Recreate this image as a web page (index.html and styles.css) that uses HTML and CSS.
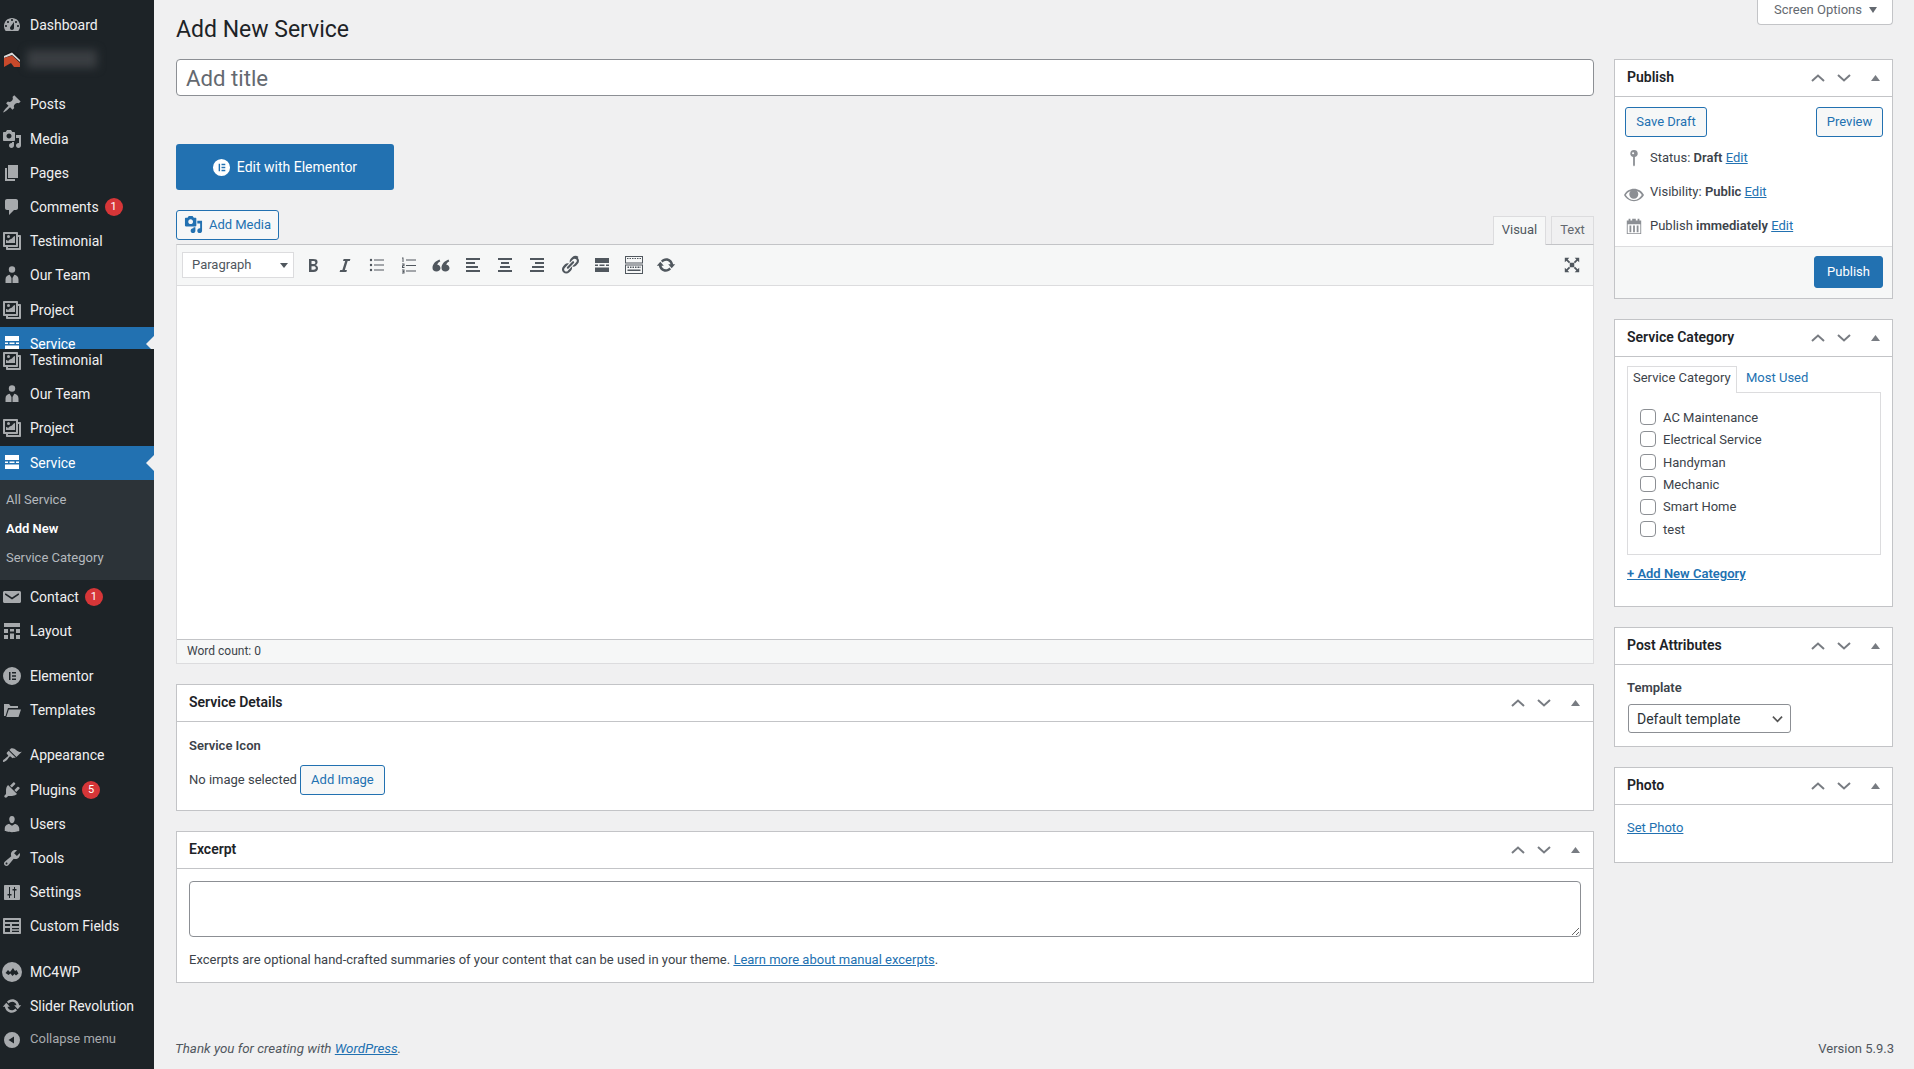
FILE: index.html
```html
<!DOCTYPE html>
<html lang="en">
<head>
<meta charset="utf-8">
<title>Add New Service</title>
<link rel="stylesheet" href="styles.css">
</head>
<body>
<svg class="sprite" xmlns="http://www.w3.org/2000/svg">
<symbol id="i-dash" viewBox="0 0 20 20"><path fill-rule="evenodd" d="M3.76 16h12.48c1.1-1.37 1.76-3.11 1.76-5 0-4.42-3.58-8-8-8s-8 3.58-8 8c0 1.89.66 3.63 1.76 5zM10 4c.55 0 1 .45 1 1s-.45 1-1 1-1-.45-1-1 .45-1 1-1zM6 6c.55 0 1 .45 1 1s-.45 1-1 1-1-.45-1-1 .45-1 1-1zm8 0c.55 0 1 .45 1 1s-.45 1-1 1-1-.45-1-1 .45-1 1-1zm-5.37 5.55L12 7v6c0 1.1-.9 2-2 2s-2-.9-2-2c0-.57.24-1.08.63-1.45zM4 10c.55 0 1 .45 1 1s-.45 1-1 1-1-.45-1-1 .45-1 1-1zm12 0c.55 0 1 .45 1 1s-.45 1-1 1-1-.45-1-1 .45-1 1-1z"/></symbol>
<symbol id="i-post" viewBox="0 0 20 20"><path d="M10.44 3.02l1.82-1.82 6.36 6.35-1.83 1.82c-1.05-.68-2.48-.57-3.41.36l-.75.75c-.92.93-1.04 2.35-.35 3.41l-1.83 1.82-2.41-2.41-2.8 2.79c-.42.42-3.38 2.71-3.8 2.29s1.86-3.39 2.28-3.81l2.79-2.79L4.1 9.36l1.83-1.82c1.05.69 2.48.57 3.4-.36l.75-.75c.93-.92 1.05-2.35.36-3.41z"/></symbol>
<symbol id="i-media" viewBox="0 0 20 20"><path fill-rule="evenodd" d="M13 11V4c0-.55-.45-1-1-1h-1.67L9 1H5L3.67 3H2c-.55 0-1 .45-1 1v7c0 .55.45 1 1 1h10c.55 0 1-.45 1-1zM7 4.5c1.38 0 2.5 1.12 2.5 2.5S8.38 9.5 7 9.5 4.5 8.38 4.5 7 5.62 4.5 7 4.5z"/><path d="M14 6h5v10.5c0 1.38-1.12 2.5-2.5 2.5S14 17.88 14 16.5s1.12-2.5 2.5-2.5c.17 0 .34.02.5.05V9h-3V6zm-4 8.05V13h2v3.5c0 1.38-1.12 2.5-2.5 2.5S7 17.88 7 16.5 8.12 14 9.5 14c.17 0 .34.02.5.05z"/></symbol>
<symbol id="i-page" viewBox="0 0 20 20"><path d="M6 15V2h10v13H6zm-1 1h8v2H3V5h2v11z"/></symbol>
<symbol id="i-comment" viewBox="0 0 20 20"><path d="M5 2h9c1.1 0 2 .9 2 2v7c0 1.1-.9 2-2 2h-2l-5 5v-5H5c-1.1 0-2-.9-2-2V4c0-1.1.9-2 2-2z"/></symbol>
<symbol id="i-gallery" viewBox="0 0 20 20"><path fill-rule="evenodd" d="M2 1h13c.6 0 1 .4 1 1v2h2c.6 0 1 .4 1 1v13c0 .6-.4 1-1 1H5c-.6 0-1-.4-1-1v-2H2c-.6 0-1-.4-1-1V2c0-.6.4-1 1-1zm1 2v11h11V3H3zm13 3v9c0 .6-.4 1-1 1H6v1h11V6h-1z"/><path d="M5 5.500a1.500 1.500 0 1 0 3 0 1.500 1.500 0 0 0-3 0zM4 12V9c2 0 2 1.500 2 1.500S7 8 9 8c1.500 0 2-3 4-3v7z"/></symbol>
<symbol id="i-team" viewBox="0 0 20 20"><circle cx="10" cy="4.500" r="3.200"/><path d="M3.500 18v-3.500c0-2.800 1.800-4.200 4.200-4.700L9.500 13v5zM16.500 18v-3.500c0-2.800-1.800-4.200-4.200-4.700L10.500 13v5z"/></symbol>
<symbol id="i-service" viewBox="0 0 20 20"><path d="M3 2h14v5H3zM3 8.500h3v1.500H3zM7.500 8.500h5v1.500h-5zM14 8.500h3v1.500h-3zM3 11.500h14V16H3z"/></symbol>
<symbol id="i-mail" viewBox="0 0 20 20"><path d="M19 14.500v-9c0-.83-.67-1.500-1.500-1.500H2.500C1.670 4 1 4.670 1 5.500v9c0 .83.67 1.500 1.500 1.500h15c.83 0 1.500-.67 1.500-1.500zM3 6.500h1L10 10.500l6-4h1v1.200L10 12.500 3 7.700z"/></symbol>
<symbol id="i-layout" viewBox="0 0 20 20"><path d="M2 2h16v4H2zM2 8h4v4H2zM8 8h4v2.500H8zM14 8h4v4h-4zM2 14h4v4H2zM8 12.500h4V18H8zM14 14h4v4h-4z"/></symbol>
<symbol id="i-elementor" viewBox="0 0 20 20"><path fill-rule="evenodd" d="M10 1a9 9 0 1 0 0 18 9 9 0 0 0 0-18zM7 6h1.500v8H7V6zm3 0h4v1.600h-4V6zm0 3.200h4v1.600h-4V9.200zm0 3.200h4V14h-4v-1.600z"/></symbol>
<symbol id="i-folder" viewBox="0 0 20 20"><path d="M2 4h5l1.500 2H16v2H6l-2.500 8H2zM6.800 9.500H19L16.500 17H4.300z"/></symbol>
<symbol id="i-brush" viewBox="0 0 20 20"><path d="M14.480 11.060L7.410 3.990l1.500-1.500c.5-.56 2.300-.47 3.510.32 1.210.8 1.430 1.280 2.910 2.100 1.180.64 2.450 1.260 4.450.85zm-.71.71L6.700 4.700 4.930 6.470c-.39.39-.39 1.020 0 1.410l1.060 1.060c.39.39.39 1.030 0 1.420-.6.6-1.430 1.110-2.210 1.690-.35.26-.7.53-1.010.84C1.430 13.230.4 14.980 1.100 15.680c.7.7 2.460-.33 3.820-1.670.31-.31.58-.66.85-1.020.57-.78 1.080-1.600 1.690-2.210.39-.39 1.020-.39 1.410 0l1.060 1.060c.39.39 1.020.39 1.410 0z"/></symbol>
<symbol id="i-plug" viewBox="0 0 20 20"><path d="M13.110 4.360L9.870 7.600 8 5.730l3.240-3.240c.35-.34 1.050-.2 1.560.32.52.51.66 1.210.31 1.550zm-8 1.770l.91-1.120 9.010 9.010-1.190.84c-.71.71-2.630 1.160-3.820 1.160H6.140L4.900 17.260c-.59.59-1.540.59-2.120 0-.59-.58-.59-1.530 0-2.120l1.240-1.240v-3.880c0-1.130.4-3.190 1.090-3.890zm7.260 3.970l3.240-3.240c.34-.35 1.040-.21 1.550.31.52.51.66 1.210.31 1.550l-3.240 3.250z"/></symbol>
<symbol id="i-user" viewBox="0 0 20 20"><path d="M10 9.250c-2.270 0-2.730-3.440-2.730-3.440C7 4.020 7.820 2 9.970 2c2.160 0 2.980 2.020 2.710 3.810 0 0-.41 3.440-2.680 3.440zm0 2.570L12.720 10c2.390 0 4.520 2.330 4.520 4.530v2.490s-3.650 1.130-7.240 1.130c-3.650 0-7.240-1.130-7.240-1.130v-2.490c0-2.250 1.940-4.480 4.470-4.480z"/></symbol>
<symbol id="i-tool" viewBox="0 0 20 20"><path fill-rule="evenodd" d="M16.680 9.770c-1.340 1.340-3.300 1.670-4.950.99l-5.410 6.520c-.99.99-2.590.99-3.580 0s-.99-2.590 0-3.570l6.520-5.420c-.68-1.650-.35-3.610.99-4.950 1.280-1.280 3.120-1.620 4.720-1.060l-2.890 2.890 2.820 2.820 2.860-2.870c.53 1.580.18 3.390-1.080 4.650zM3.810 16.210c.4.39 1.040.39 1.430 0 .4-.4.4-1.040 0-1.430-.39-.4-1.030-.4-1.430 0-.39.39-.39 1.030 0 1.430z"/></symbol>
<symbol id="i-settings" viewBox="0 0 20 20"><path fill-rule="evenodd" d="M18 17V4c0-.55-.45-1-1-1H3c-.55 0-1 .45-1 1v13c0 .55.45 1 1 1h14c.55 0 1-.45 1-1zM7 5h1v7h1.500v1.500H8V16H7v-2.500H5.500V12H7V5zm5 3.500h-1.500V7H12V5h1v2h1.500v1.500H13V16h-1V8.500z"/></symbol>
<symbol id="i-fields" viewBox="0 0 20 20"><path fill-rule="evenodd" d="M2 2h16c.6 0 1 .4 1 1v14c0 .6-.4 1-1 1H2c-.6 0-1-.4-1-1V3c0-.6.4-1 1-1zm1 2v2h14V4H3zm0 4v2h5V8H3zm7 0v2h7V8h-7zm-7 4v4h5v-4H3zm7 0v1.200h7V12h-7zm0 2.800V16h7v-1.200h-7z"/></symbol>
<symbol id="i-mc" viewBox="0 0 20 20"><path fill-rule="evenodd" d="M10 0a10 10 0 1 0 0 20 10 10 0 0 0 0-20zM3.500 11l2.500-3 2 2 3-4 2 3 1.500-1 2 3.500-2.500 2-1.500-1.500-2 2-2-2.500-2 1.500z"/></symbol>
<symbol id="i-update" viewBox="0 0 20 20"><path d="M10.200 3.280c3.530 0 6.430 2.610 6.920 6h2.080l-3.500 4-3.500-4h2.320c-.45-1.970-2.210-3.440-4.320-3.440-1.450 0-2.730.71-3.540 1.780L4.950 5.660C6.230 4.200 8.110 3.280 10.200 3.280zm-.4 13.440c-3.520 0-6.430-2.610-6.920-6H.800l3.500-4c1.170 1.330 2.330 2.670 3.500 4H5.480c.45 1.970 2.210 3.440 4.320 3.440 1.450 0 2.730-.71 3.540-1.780l1.710 1.950c-1.280 1.460-3.150 2.390-5.250 2.390z"/></symbol>
<symbol id="i-collapse" viewBox="0 0 20 20"><path fill-rule="evenodd" d="M10 2a8 8 0 1 0 0 16 8 8 0 0 0 0-16zm2 4.500v7L6.500 10z"/></symbol>
<symbol id="i-bold" viewBox="0 0 20 20"><path fill-rule="evenodd" d="M6 4v13h4.540c1.370 0 2.460-.33 3.260-1 .8-.66 1.200-1.580 1.200-2.770 0-.84-.24-1.540-.71-2.080-.47-.55-1.150-.9-2.030-1.050v-.11c.68-.14 1.240-.5 1.660-1.060.42-.57.64-1.240.64-2.010 0-1.010-.39-1.780-1.150-2.320C12.650 4.200 11.560 4 10.140 4H6zm2.500 5.200V6.100h1.670c.78 0 1.340.1 1.680.33.34.22.51.58.51 1.070 0 .53-.18.93-.53 1.170-.35.25-.89.37-1.600.37H8.500zm0 2h1.900c.8 0 1.400.14 1.800.43.4.28.6.71.6 1.290 0 .64-.2 1.110-.58 1.400-.39.3-.98.45-1.780.45H8.500v-3.570z"/></symbol>
<symbol id="i-italic" viewBox="0 0 20 20"><path d="M14.780 6h-2.130l-2.800 9h2.120l-.62 2H4.600l.62-2h2.140l2.800-9H8.030l.62-2h6.750z"/></symbol>
<symbol id="i-ul" viewBox="0 0 20 20"><path d="M5.200 5a1.200 1.200 0 1 1-2.400 0 1.200 1.200 0 0 1 2.400 0zM5.200 10a1.200 1.200 0 1 1-2.400 0 1.200 1.200 0 0 1 2.400 0zM5.200 15a1.200 1.200 0 1 1-2.400 0 1.200 1.200 0 0 1 2.400 0zM7 4.500h10v1H7zM7 9.500h10v1H7zM7 14.500h10v1H7z"/></symbol>
<symbol id="i-ol" viewBox="0 0 20 20"><path d="M3 2.500h1.500V7h-1V3.500H3zM3 8.500h2.500v2.700H4v.8h1.500v1H3v-2.700h1.500v-.8H3zM3 14.500h2.500v4H3v-1h1.500v-.5h-1v-1h1v-.5H3zM7 4.500h10v1H7zM7 10h10v1H7zM7 15.500h10v1H7z"/></symbol>
<symbol id="i-quote" viewBox="0 0 20 20"><path d="M9.500 13.200c0-1.900-1.400-3.400-3.200-3.500.3-1.300 1.400-2.500 3-3.200L8.500 4.500C4.500 6 1.500 9 1.500 13c0 2 1.500 3.500 4 3.500 2 0 4-1.400 4-3.300zM18.500 13.200c0-1.900-1.400-3.400-3.200-3.500.3-1.300 1.400-2.500 3-3.200l-.8-2C13.500 6 10.500 9 10.500 13c0 2 1.500 3.500 4 3.500 2 0 4-1.400 4-3.300z"/></symbol>
<symbol id="i-al" viewBox="0 0 20 20"><path d="M3 3h14v2H3zM3 7h9v2H3zM3 11h12v2H3zM3 15h14v2H3z"/></symbol>
<symbol id="i-ac" viewBox="0 0 20 20"><path d="M3 3h14v2H3zM6 7h8v2H6zM5 11h10v2H5zM3 15h14v2H3z"/></symbol>
<symbol id="i-ar" viewBox="0 0 20 20"><path d="M3 3h14v2H3zM8 7h9v2H8zM5 11h12v2H5zM3 15h14v2H3z"/></symbol>
<symbol id="i-link" viewBox="0 0 20 20"><path d="M17.740 2.760c1.680 1.690 1.680 4.410 0 6.100l-1.530 1.520c-1.120 1.120-2.700 1.490-4.130 1.130l2.620-2.620.76-.77.76-.76c.84-.84.84-2.200 0-3.040-.84-.85-2.200-.85-3.040 0l-.77.76-2.620 2.620c-.37-1.430 0-3.010 1.120-4.130l1.520-1.530c1.690-1.680 4.420-1.680 6.100 0zM8.590 13.430l5.340-5.340c.42-.42.42-1.100 0-1.520-.44-.43-1.130-.39-1.530 0l-5.330 5.340c-.42.42-.42 1.100 0 1.520.44.43 1.130.39 1.520 0zm-.76 2.290l2.620-2.620 1.520-1.520c.38 1.430 0 3.020-1.120 4.140l-1.520 1.520c-1.690 1.690-4.410 1.690-6.100 0-1.690-1.680-1.690-4.410 0-6.100l1.530-1.520c1.120-1.120 2.700-1.500 4.130-1.120L4.760 12.920c-.84.840-.84 2.200 0 3.040.84.850 2.200.85 3.040 0z"/></symbol>
<symbol id="i-more" viewBox="0 0 20 20"><path d="M3 3h14v5H3zM3 9.500h3V11H3zM7.500 9.500h5V11h-5zM14 9.500h3V11h-3zM3 12.500h14V17H3z"/></symbol>
<symbol id="i-kitchen" viewBox="0 0 20 20"><path fill-rule="evenodd" d="M1 1h18v7.500H1V1zm1 1v5.500h16V2H2zm1 1h1.500v1H3zm2.500 0H7v1H5.500zM8 3h1.500v1H8zm2.500 0H12v1h-1.500zM13 3h1.500v1H13zm2.500 0H17v1h-1.500zM1 9.500h18V19H1V9.500zm1 1V18h16v-7.500H2zm1.500 1H5V13H3.500zm2.500 0h1.500V13H6zm2.500 0H10V13H8.500zm2.500 0h1.500V13H11zm2.500 0H15V13h-1.500zm2 0h1V13h-1zM3.500 14.500h13V16h-13z"/></symbol>
<symbol id="i-full" viewBox="0 0 20 20"><path d="M7.500 7.500h5v5h-5zM2 2h5L5.200 3.800 8 6.600 6.600 8 3.800 5.200 2 7zM18 2v5l-1.800-1.800L13.400 8 12 6.600l2.800-2.800L13 2zM2 18v-5l1.800 1.800L6.600 12 8 13.400l-2.800 2.800L7 18zM18 18h-5l1.800-1.800L12 13.400l1.400-1.400 2.800 2.800L18 13z"/></symbol>
<symbol id="i-pin" viewBox="0 0 20 20"><path fill-rule="evenodd" d="M10 1a4 4 0 0 1 1 7.900V18l-1 1.500L9 18V8.900A4 4 0 0 1 10 1zM9 3.500a1.200 1.200 0 1 0 0 2.400 1.200 1.200 0 0 0 0-2.400z"/></symbol>
<symbol id="i-eye" viewBox="0 0 20 20"><path fill-rule="evenodd" d="M19.700 9.400C17.700 6 14.100 3.800 10 3.800S2.300 6 .3 9.400L0 10l.3.600c2 3.400 5.600 5.600 9.700 5.600s7.700-2.200 9.700-5.600l.3-.6-.3-.6zM10 15c-3.400 0-6.400-1.900-8.200-5 1.100-1.800 2.800-3.200 4.800-4-.8.800-1.300 1.900-1.300 3.200 0 2.500 2 4.500 4.500 4.500s4.500-2 4.500-4.500c0-1.300-.5-2.400-1.300-3.200 2 .8 3.700 2.200 4.800 4-1.800 3.100-4.800 5-7.800 5z"/></symbol>
<symbol id="i-cal" viewBox="0 0 20 20"><path fill-rule="evenodd" d="M2 4h2V2h2v2h2V2h4v2h2V2h2v2h2v15H2V4zm1 4v10h14V8H3zm2 1.500h2V17H5zm4 0h2V17H9zm4 0h2V17h-2z"/></symbol>
<symbol id="i-up" viewBox="0 0 14 8"><path class="chev" d="M1 7l6-5.500L13 7"/></symbol>
<symbol id="i-down" viewBox="0 0 14 8"><path class="chev" d="M1 1l6 5.500L13 1"/></symbol>
<symbol id="i-tri" viewBox="0 0 9 6"><path d="M4.500 0L9 6H0z"/></symbol>
</svg>

<div class="page">
<nav class="sidebar">
  <ul class="menu menu-first">
    <li class="mi"><svg class="mi-ic"><use href="#i-dash"/></svg>Dashboard</li>
    <li class="mi mi-hidden"><svg class="mi-ic" viewBox="0 0 20 20"><path class="logo-dark" d="M2 6l8-4 8 6v6z"/><path class="logo-white" d="M2 7l8-3.500L18 11v2L10 6 2 9z"/><path class="logo-red" d="M2 9l8-2.500 8 7.500v4h-6l-3-4-7 4z"/></svg><span class="blur"></span></li>
    <li class="mi sep"><svg class="mi-ic"><use href="#i-post"/></svg>Posts</li>
    <li class="mi"><svg class="mi-ic"><use href="#i-media"/></svg>Media</li>
    <li class="mi"><svg class="mi-ic"><use href="#i-page"/></svg>Pages</li>
    <li class="mi"><svg class="mi-ic"><use href="#i-comment"/></svg>Comments<span class="badge">1</span></li>
    <li class="mi"><svg class="mi-ic"><use href="#i-gallery"/></svg>Testimonial</li>
    <li class="mi"><svg class="mi-ic"><use href="#i-team"/></svg>Our Team</li>
    <li class="mi mi-nudge"><svg class="mi-ic"><use href="#i-gallery"/></svg>Project</li>
    <li class="mi active"><svg class="mi-ic"><use href="#i-service"/></svg>Service</li>
  </ul>
  <ul class="menu menu-second">
    <li class="mi mi-tight"><svg class="mi-ic"><use href="#i-gallery"/></svg>Testimonial</li>
    <li class="mi"><svg class="mi-ic"><use href="#i-team"/></svg>Our Team</li>
    <li class="mi"><svg class="mi-ic"><use href="#i-gallery"/></svg>Project</li>
    <li class="mi active"><svg class="mi-ic"><use href="#i-service"/></svg>Service</li>
    <li class="submenu">
      <a class="sub">All Service</a>
      <a class="sub sub-cur">Add New</a>
      <a class="sub">Service Category</a>
    </li>
    <li class="mi"><svg class="mi-ic"><use href="#i-mail"/></svg>Contact<span class="badge">1</span></li>
    <li class="mi"><svg class="mi-ic"><use href="#i-layout"/></svg>Layout</li>
    <li class="mi sep"><svg class="mi-ic"><use href="#i-elementor"/></svg>Elementor</li>
    <li class="mi"><svg class="mi-ic"><use href="#i-folder"/></svg>Templates</li>
    <li class="mi sep"><svg class="mi-ic"><use href="#i-brush"/></svg>Appearance</li>
    <li class="mi"><svg class="mi-ic"><use href="#i-plug"/></svg>Plugins<span class="badge">5</span></li>
    <li class="mi"><svg class="mi-ic"><use href="#i-user"/></svg>Users</li>
    <li class="mi"><svg class="mi-ic"><use href="#i-tool"/></svg>Tools</li>
    <li class="mi"><svg class="mi-ic"><use href="#i-settings"/></svg>Settings</li>
    <li class="mi"><svg class="mi-ic"><use href="#i-fields"/></svg>Custom Fields</li>
    <li class="mi sep"><svg class="mi-ic"><use href="#i-mc"/></svg>MC4WP</li>
    <li class="mi"><svg class="mi-ic"><use href="#i-update"/></svg>Slider Revolution</li>
    <li class="mi mi-collapse"><svg class="mi-ic"><use href="#i-collapse"/></svg>Collapse menu</li>
  </ul>
</nav>

<main class="main">
  <header class="head">
    <h1 class="title">Add New Service</h1>
    <div class="screen-opts">Screen Options<span class="caret"></span></div>
  </header>
  <div class="columns">
    <div class="col-main">
      <input class="title-input" type="text" placeholder="Add title">
      <div class="elementor-btn"><svg class="el-ic"><use href="#i-elementor"/></svg>Edit with Elementor</div>
      <div class="editor-top">
        <button class="btn add-media"><svg class="am-ic"><use href="#i-media"/></svg>Add Media</button>
        <div class="tabs"><span class="etab etab-on">Visual</span><span class="etab">Text</span></div>
      </div>
      <div class="editor">
        <div class="toolbar">
          <div class="fmt">Paragraph<span class="caret caret-lg"></span></div>
          <span class="tb"><svg><use href="#i-bold"/></svg></span>
          <span class="tb"><svg><use href="#i-italic"/></svg></span>
          <span class="tb"><svg><use href="#i-ul"/></svg></span>
          <span class="tb"><svg><use href="#i-ol"/></svg></span>
          <span class="tb"><svg><use href="#i-quote"/></svg></span>
          <span class="tb"><svg><use href="#i-al"/></svg></span>
          <span class="tb"><svg><use href="#i-ac"/></svg></span>
          <span class="tb"><svg><use href="#i-ar"/></svg></span>
          <span class="tb"><svg><use href="#i-link"/></svg></span>
          <span class="tb"><svg><use href="#i-more"/></svg></span>
          <span class="tb"><svg><use href="#i-kitchen"/></svg></span>
          <span class="tb"><svg><use href="#i-update"/></svg></span>
          <span class="tb tb-full"><svg><use href="#i-full"/></svg></span>
        </div>
        <div class="edit-area"></div>
        <div class="word-count">Word count: 0</div>
      </div>

      <section class="box box-details">
        <div class="box-head"><h2>Service Details</h2><div class="ctrl"><svg class="ch"><use href="#i-up"/></svg><svg class="ch"><use href="#i-down"/></svg><svg class="tri"><use href="#i-tri"/></svg></div></div>
        <div class="details-body">
          <div class="strong-label">Service Icon</div>
          <div class="img-row">No image selected<button class="btn add-image">Add Image</button></div>
        </div>
      </section>

      <section class="box box-excerpt">
        <div class="box-head"><h2>Excerpt</h2><div class="ctrl"><svg class="ch"><use href="#i-up"/></svg><svg class="ch"><use href="#i-down"/></svg><svg class="tri"><use href="#i-tri"/></svg></div></div>
        <div class="excerpt-body">
          <textarea class="excerpt-input"></textarea>
          <p class="excerpt-note">Excerpts are optional hand-crafted summaries of your content that can be used in your theme. <a class="lnk">Learn more about manual excerpts</a>.</p>
        </div>
      </section>
    </div>

    <aside class="col-side">
      <section class="box box-publish">
        <div class="box-head"><h2>Publish</h2><div class="ctrl"><svg class="ch"><use href="#i-up"/></svg><svg class="ch"><use href="#i-down"/></svg><svg class="tri"><use href="#i-tri"/></svg></div></div>
        <div class="pub-btns"><button class="btn save-draft">Save Draft</button><button class="btn preview">Preview</button></div>
        <div class="pub-row"><svg class="pub-ic"><use href="#i-pin"/></svg><span>Status: <b>Draft</b> <a class="lnk">Edit</a></span></div>
        <div class="pub-row"><svg class="pub-ic pub-ic-eye"><use href="#i-eye"/></svg><span>Visibility: <b>Public</b> <a class="lnk">Edit</a></span></div>
        <div class="pub-row"><svg class="pub-ic"><use href="#i-cal"/></svg><span>Publish <b>immediately</b> <a class="lnk">Edit</a></span></div>
        <div class="pub-foot"><button class="btn-primary">Publish</button></div>
      </section>

      <section class="box box-cat">
        <div class="box-head"><h2>Service Category</h2><div class="ctrl"><svg class="ch"><use href="#i-up"/></svg><svg class="ch"><use href="#i-down"/></svg><svg class="tri"><use href="#i-tri"/></svg></div></div>
        <div class="cat-body">
          <div class="cat-tabs"><span class="cat-tab">Service Category</span><a class="cat-most">Most Used</a></div>
          <ul class="cat-list">
            <li><label><input type="checkbox" class="cb">AC Maintenance</label></li>
            <li><label><input type="checkbox" class="cb">Electrical Service</label></li>
            <li><label><input type="checkbox" class="cb">Handyman</label></li>
            <li><label><input type="checkbox" class="cb">Mechanic</label></li>
            <li><label><input type="checkbox" class="cb">Smart Home</label></li>
            <li><label><input type="checkbox" class="cb">test</label></li>
          </ul>
          <a class="lnk add-cat">+ Add New Category</a>
        </div>
      </section>

      <section class="box box-attr">
        <div class="box-head"><h2>Post Attributes</h2><div class="ctrl"><svg class="ch"><use href="#i-up"/></svg><svg class="ch"><use href="#i-down"/></svg><svg class="tri"><use href="#i-tri"/></svg></div></div>
        <div class="attr-body">
          <div class="strong-label">Template</div>
          <select class="tpl"><option>Default template</option></select>
        </div>
      </section>

      <section class="box box-photo">
        <div class="box-head"><h2>Photo</h2><div class="ctrl"><svg class="ch"><use href="#i-up"/></svg><svg class="ch"><use href="#i-down"/></svg><svg class="tri"><use href="#i-tri"/></svg></div></div>
        <div class="photo-body"><a class="lnk">Set Photo</a></div>
      </section>
    </aside>
  </div>
  <footer class="foot">
    <span class="thanks">Thank you for creating with <a class="lnk">WordPress</a>.</span>
    <span class="version">Version 5.9.3</span>
  </footer>
</main>
</div>
</body>
</html>
```
FILE: styles.css
```css
* { box-sizing: border-box; }
html, body { margin: 0; padding: 0; height: 100%; }
body {
  background: #f0f0f1;
  color: #3c434a;
  font-family: Roboto, "Liberation Sans", sans-serif;
  font-size: 13px;
  line-height: 1.4;
  overflow: hidden;
}
.sprite { display: none; }
svg { fill: currentColor; }
.chev { fill: none; stroke: currentColor; stroke-width: 2; }
ul { list-style: none; margin: 0; padding: 0; }
a { color: inherit; }
.lnk { color: #2271b1; text-decoration: underline; }
button { font-family: inherit; cursor: pointer; }

.page { display: flex; height: 1069px; overflow: hidden; }

/* sidebar */
.sidebar {
  width: 154px;
  flex: none;
  background: #1d2327;
  color: #f0f0f1;
  font-size: 14px;
  padding-top: 8px;
}
.menu-first { height: 341px; overflow: hidden; }
.mi {
  position: relative;
  display: flex;
  align-items: center;
  height: 34.2px;
  padding-left: 30px;
  line-height: 18.2px;
}
.mi-ic {
  position: absolute;
  left: 2px;
  top: 7px;
  width: 20px;
  height: 20px;
  color: #a7aaad;
}
.mi.sep { margin-top: 11px; }
.mi-nudge { padding-top: 1px; }
.mi-tight { height: 19px; margin-top: 2px; margin-bottom: 7.2px; }
.mi-tight .mi-ic { top: 0; }
.mi-hidden .mi-ic { top: 7px; }
.logo-dark { fill: #15181b; }
.logo-white { fill: #d8d8d8; }
.logo-red { fill: #c8492b; }
.blur {
  display: block;
  width: 70px;
  height: 18px;
  margin-left: -3px;
  background: #3a3e42;
  filter: blur(4px);
}
.active { background: #2271b1; color: #fff; }
.active .mi-ic { color: #fff; }
.active::after {
  content: "";
  position: absolute;
  right: 0;
  top: 50%;
  margin-top: -8px;
  border: 8px solid transparent;
  border-right-color: #f0f0f1;
  border-left-width: 0;
}
.submenu {
  display: flex;
  flex-direction: column;
  background: #2c3338;
  padding: 5px 0;
  height: 100px;
  color: #b4b9be;
  font-size: 13px;
}
.sub {
  display: block;
  padding-left: 6px;
  height: 29px;
  line-height: 29px;
}
.sub-cur { color: #fff; font-weight: 600; }
.badge {
  display: inline-block;
  width: 18px;
  height: 18px;
  margin-left: 6px;
  border-radius: 50%;
  background: #d63638;
  color: #fff;
  font-size: 11px;
  line-height: 18px;
  text-align: center;
}
.mi-collapse { color: #a7aaad; font-size: 13px; height: 32px; margin-top: 0; }
.mi-collapse .mi-ic { top: 7px; }

/* main */
.main { flex: 1; min-width: 0; padding: 0 21px 0 22px; }
.head {
  display: flex;
  justify-content: space-between;
  align-items: flex-start;
  height: 59px;
}
.title {
  margin: 15px 0 0;
  font-size: 23px;
  font-weight: 400;
  line-height: 30px;
  color: #1d2327;
}
.screen-opts {
  display: flex;
  align-items: center;
  width: 136px;
  height: 26px;
  margin-top: -1px;
  padding: 0 0 3px 16px;
  background: #fff;
  border: 1px solid #c3c4c7;
  border-top: 0;
  border-radius: 0 0 4px 4px;
  color: #646970;
  line-height: 22px;
}
.caret {
  display: inline-block;
  margin-left: 7px;
  border: 4px solid transparent;
  border-top: 6px solid #646970;
  border-bottom: 0;
}
.columns { display: flex; gap: 20px; align-items: flex-start; }
.col-main { width: 1418px; flex: none; }
.col-side { width: 279px; flex: none; }

.title-input {
  display: block;
  width: 100%;
  height: 37px;
  padding: 1px 9px 0;
  border: 1px solid #8c8f94;
  border-radius: 4px;
  background: #fff;
  font-family: inherit;
  font-size: 22.2px;
  color: #2c3338;
}
.title-input::placeholder { color: #646970; opacity: 1; }
.elementor-btn {
  display: flex;
  align-items: center;
  justify-content: center;
  width: 218px;
  height: 46px;
  margin-top: 48px;
  padding-top: 1px;
  border-radius: 3px;
  background: #2271b1;
  color: #fff;
  font-size: 14px;
}
.el-ic { width: 19px; height: 19px; margin: -1px 6px 0 -1px; }

.editor-top {
  display: flex;
  justify-content: space-between;
  align-items: flex-start;
  height: 34px;
  margin-top: 20px;
}
.btn {
  display: inline-flex;
  align-items: center;
  justify-content: center;
  height: 30px;
  padding: 0 0 1px;
  border: 1px solid #2271b1;
  border-radius: 3px;
  background: #f6f7f7;
  color: #2271b1;
  font-size: 13px;
}
.add-media { width: 103px; }
.am-ic { width: 19px; height: 19px; margin-right: 6px; }
.tabs { display: flex; gap: 5px; margin-top: 6px; }
.etab {
  display: flex;
  align-items: center;
  justify-content: center;
  width: 43px;
  height: 28px;
  padding-bottom: 1px;
  border: 1px solid #dcdcde;
  border-bottom: 0;
  background: #f0f0f1;
  color: #646970;
}
.etab-on {
  width: 53px;
  height: 29px;
  background: #f6f7f7;
  color: #50575e;
  position: relative;
  z-index: 1;
}
.editor { border: 1px solid #dcdcde; border-top: 1px solid #c3c4c7; background: #fff; }
.toolbar {
  display: flex;
  align-items: center;
  height: 41px;
  padding-left: 5px;
  background: #f6f7f7;
  border-bottom: 1px solid #dcdcde;
}
.fmt {
  display: flex;
  align-items: center;
  justify-content: space-between;
  width: 112px;
  height: 26px;
  margin-right: 3px;
  padding: 0 5px 0 9px;
  background: #fff;
  border: 1px solid #dcdcde;
  color: #50575e;
}
.caret-lg { border-width: 4px; border-top-width: 5px; border-top-color: #50575e; }
.tb {
  display: flex;
  align-items: center;
  justify-content: center;
  width: 32.07px;
  height: 32px;
  color: #50575e;
}
.tb svg { width: 20px; height: 20px; }
.tb-full { margin-left: auto; margin-right: 5px; }
.tb-full svg { width: 18px; height: 18px; }
.edit-area { height: 353px; background: #fff; }
.word-count {
  height: 24px;
  padding-left: 10px;
  background: #f6f7f7;
  border-top: 1px solid #c3c4c7;
  font-size: 12px;
  line-height: 23px;
}

.box {
  background: #fff;
  border: 1px solid #c3c4c7;
  margin-bottom: 20px;
}
.box-head {
  display: flex;
  align-items: center;
  justify-content: space-between;
  height: 37px;
  padding: 0 13px 0 12px;
  border-bottom: 1px solid #c3c4c7;
}
.col-side .box-head { padding-right: 12px; }
.box-head h2 {
  margin: 0;
  font-size: 14px;
  font-weight: 600;
  color: #1d2327;
}
.ctrl { display: flex; align-items: center; color: #787c82; }
.ch { width: 14px; height: 8px; margin-right: 12px; }
.ch + .ch { margin-right: 20px; }
.tri { width: 9px; height: 6px; }

.box-details { margin-top: 20px; height: 127px; }
.details-body { padding: 15px 12px 0; }
.strong-label { font-weight: 600; color: #3c434a; }
.img-row { display: flex; align-items: center; gap: 3px; margin-top: 10px; }
.add-image { width: 85px; }
.box-excerpt { height: 152px; }
.excerpt-body { padding: 12px 12px 0; }
.excerpt-input {
  display: block;
  width: 100%;
  height: 56px;
  border: 1px solid #8c8f94;
  border-radius: 4px;
  background: #fff;
  resize: vertical;
}
.excerpt-note { margin: 14px 0 0; }

.box-publish { height: 240px; }
.pub-btns {
  display: flex;
  justify-content: space-between;
  padding: 10px 9px 4px 10px;
}
.save-draft { width: 82px; }
.preview { width: 67px; }
.pub-row {
  display: flex;
  align-items: center;
  height: 34px;
  padding-left: 35px;
  position: relative;
}
.pub-ic {
  position: absolute;
  left: 10px;
  top: 8px;
  width: 18px;
  height: 18px;
  color: #8c8f94;
}
.pub-ic-eye { top: 10px; left: 9px; width: 20px; height: 20px; }
.pub-row b { font-weight: 600; }
.pub-foot {
  display: flex;
  justify-content: flex-end;
  align-items: center;
  height: 52px;
  margin-top: 3px;
  padding: 0 9px 2px 0;
  background: #f6f7f7;
  border-top: 1px solid #dcdcde;
}
.btn-primary {
  width: 69px;
  height: 32px;
  border: 1px solid #2271b1;
  border-radius: 3px;
  background: #2271b1;
  color: #fff;
  font-size: 13px;
}

.box-cat { height: 288px; }
.cat-body { padding: 9px 11px 0 12px; }
.cat-tabs { display: flex; align-items: center; height: 27px; position: relative; }
.cat-tab {
  width: 110px;
  height: 27px;
  padding-left: 5px;
  line-height: 22px;
  background: #fff;
  border: 1px solid #dcdcde;
  border-bottom: 0;
  position: relative;
  z-index: 1;
}
.cat-most { margin-left: 9px; color: #2271b1; margin-top: -3px; }
.cat-list {
  height: 163px;
  margin-top: -1px;
  padding: 14px 12px 0;
  border: 1px solid #dcdcde;
}
.cat-list li { height: 22.4px; }
.cat-list label { display: flex; align-items: center; height: 22px; }
.cb {
  appearance: none;
  width: 16px;
  height: 16px;
  margin: -2px 7px 0 0;
  background: #fff;
  border: 1px solid #8c8f94;
  border-radius: 4px;
}
.add-cat { display: block; margin-top: 10px; font-weight: 600; }

.box-attr { height: 120px; }
.attr-body { padding: 14px 12px 0; }
.tpl {
  display: block;
  width: 163px;
  height: 29px;
  margin: 7px 0 0 1px;
  padding: 0 24px 0 8px;
  appearance: none;
  border: 1px solid #8c8f94;
  border-radius: 3px;
  background: #fff url("data:image/svg+xml,%3Csvg xmlns='http://www.w3.org/2000/svg' viewBox='0 0 12 8'%3E%3Cpath d='M1 1.500l5 5 5-5' fill='none' stroke='%23555' stroke-width='1.800'/%3E%3C/svg%3E") no-repeat right 7px center / 11px 8px;
  font-family: inherit;
  font-size: 14px;
  color: #2c3338;
}
.box-photo { height: 96px; }
.photo-body { padding: 14px 12px 0; }

.foot {
  display: flex;
  justify-content: space-between;
  margin-top: 37px;
  color: #50575e;
}
.thanks { font-style: italic; font-size: 13.35px; margin-left: -1px; }
.version { margin-right: -1px; }
```
